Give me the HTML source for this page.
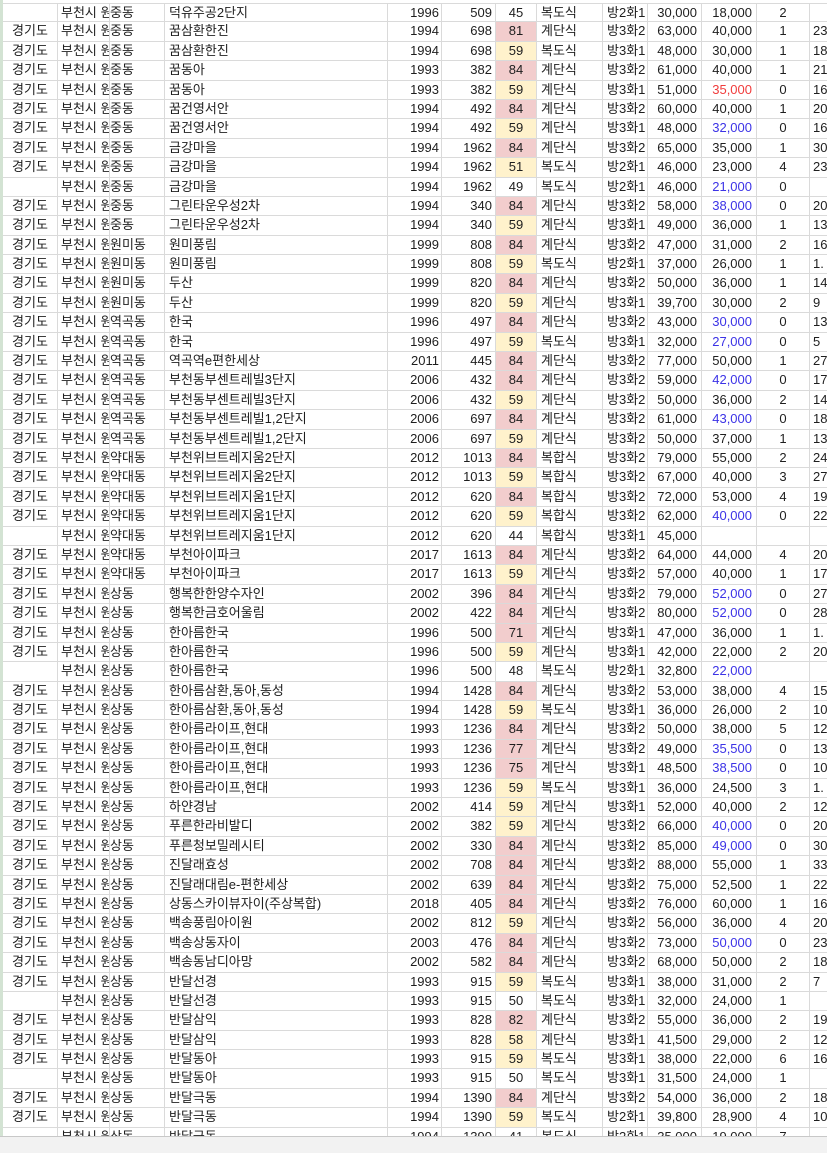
<!DOCTYPE html>
<html><head><meta charset="utf-8"><style>
body{margin:0;width:827px;height:1152px;overflow:hidden;background:#fff;position:relative;font-family:"Liberation Sans","Noto Sans CJK KR",sans-serif;font-size:13px;color:#1e1e1e}
#g{position:absolute;left:3px;top:3px;width:830px}
.r{display:flex;height:19.4px;box-sizing:border-box;border-bottom:1px solid #dadada}
.r i{font-style:normal;display:block;box-sizing:border-box;border-right:1px solid #dadada;overflow:hidden;white-space:nowrap;line-height:18.4px;height:18.4px}
.r i:nth-child(1){width:55px;text-align:center}
.r i:nth-child(2){width:52px;padding-left:3px}
.r i:nth-child(3){width:55px;padding-left:0}
.r i:nth-child(4){width:223px;padding-left:4px}
.r i:nth-child(5){width:54px;text-align:right;padding-right:2px}
.r i:nth-child(6){width:54px;text-align:right;padding-right:3px}
.r i:nth-child(7){width:41px;text-align:center}
.r i:nth-child(8){width:66px;padding-left:4px}
.r i:nth-child(9){width:45px;padding-left:4px}
.r i:nth-child(10){width:54px;text-align:right;padding-right:4px}
.r i:nth-child(11){width:55px;text-align:right;padding-right:4px}
.r i:nth-child(12){width:53px;text-align:center}
.r i:nth-child(13){width:20px;padding-left:3px;border-right:none}
.r i.p{background:#f2cdcd}.r i.y{background:#fff2cc}
.r i.b{color:#3c33e6}.r i.d{color:#f03c3c}
#lft{position:absolute;left:0;top:0;width:3px;height:1137px;background:#d3e3d3}
#bot{position:absolute;left:0;top:1136px;width:827px;height:16px;background:#f2f2f2;border-top:1px solid #c8c8c8}
</style></head><body>
<div id="lft"></div>
<div id="g">
<div class="r" style="border-top:1px solid #dadada"><i></i><i>부천시 원미구</i><i>중동</i><i>덕유주공2단지</i><i>1996</i><i>509</i><i>45</i><i>복도식</i><i>방2화1</i><i>30,000</i><i>18,000</i><i>2</i><i></i></div>
<div class="r"><i>경기도</i><i>부천시 원미구</i><i>중동</i><i>꿈삼환한진</i><i>1994</i><i>698</i><i class="p">81</i><i>계단식</i><i>방3화2</i><i>63,000</i><i>40,000</i><i>1</i><i>23</i></div>
<div class="r"><i>경기도</i><i>부천시 원미구</i><i>중동</i><i>꿈삼환한진</i><i>1994</i><i>698</i><i class="y">59</i><i>복도식</i><i>방3화1</i><i>48,000</i><i>30,000</i><i>1</i><i>18</i></div>
<div class="r"><i>경기도</i><i>부천시 원미구</i><i>중동</i><i>꿈동아</i><i>1993</i><i>382</i><i class="p">84</i><i>계단식</i><i>방3화2</i><i>61,000</i><i>40,000</i><i>1</i><i>21</i></div>
<div class="r"><i>경기도</i><i>부천시 원미구</i><i>중동</i><i>꿈동아</i><i>1993</i><i>382</i><i class="y">59</i><i>계단식</i><i>방3화1</i><i>51,000</i><i class="d">35,000</i><i>0</i><i>16</i></div>
<div class="r"><i>경기도</i><i>부천시 원미구</i><i>중동</i><i>꿈건영서안</i><i>1994</i><i>492</i><i class="p">84</i><i>계단식</i><i>방3화2</i><i>60,000</i><i>40,000</i><i>1</i><i>20</i></div>
<div class="r"><i>경기도</i><i>부천시 원미구</i><i>중동</i><i>꿈건영서안</i><i>1994</i><i>492</i><i class="y">59</i><i>계단식</i><i>방3화1</i><i>48,000</i><i class="b">32,000</i><i>0</i><i>16</i></div>
<div class="r"><i>경기도</i><i>부천시 원미구</i><i>중동</i><i>금강마을</i><i>1994</i><i>1962</i><i class="p">84</i><i>계단식</i><i>방3화2</i><i>65,000</i><i>35,000</i><i>1</i><i>30</i></div>
<div class="r"><i>경기도</i><i>부천시 원미구</i><i>중동</i><i>금강마을</i><i>1994</i><i>1962</i><i class="y">51</i><i>복도식</i><i>방2화1</i><i>46,000</i><i>23,000</i><i>4</i><i>23</i></div>
<div class="r"><i></i><i>부천시 원미구</i><i>중동</i><i>금강마을</i><i>1994</i><i>1962</i><i>49</i><i>복도식</i><i>방2화1</i><i>46,000</i><i class="b">21,000</i><i>0</i><i></i></div>
<div class="r"><i>경기도</i><i>부천시 원미구</i><i>중동</i><i>그린타운우성2차</i><i>1994</i><i>340</i><i class="p">84</i><i>계단식</i><i>방3화2</i><i>58,000</i><i class="b">38,000</i><i>0</i><i>20</i></div>
<div class="r"><i>경기도</i><i>부천시 원미구</i><i>중동</i><i>그린타운우성2차</i><i>1994</i><i>340</i><i class="y">59</i><i>계단식</i><i>방3화1</i><i>49,000</i><i>36,000</i><i>1</i><i>13</i></div>
<div class="r"><i>경기도</i><i>부천시 원미구</i><i>원미동</i><i>원미풍림</i><i>1999</i><i>808</i><i class="p">84</i><i>계단식</i><i>방3화2</i><i>47,000</i><i>31,000</i><i>2</i><i>16</i></div>
<div class="r"><i>경기도</i><i>부천시 원미구</i><i>원미동</i><i>원미풍림</i><i>1999</i><i>808</i><i class="y">59</i><i>복도식</i><i>방2화1</i><i>37,000</i><i>26,000</i><i>1</i><i>1.</i></div>
<div class="r"><i>경기도</i><i>부천시 원미구</i><i>원미동</i><i>두산</i><i>1999</i><i>820</i><i class="p">84</i><i>계단식</i><i>방3화2</i><i>50,000</i><i>36,000</i><i>1</i><i>14</i></div>
<div class="r"><i>경기도</i><i>부천시 원미구</i><i>원미동</i><i>두산</i><i>1999</i><i>820</i><i class="y">59</i><i>계단식</i><i>방3화1</i><i>39,700</i><i>30,000</i><i>2</i><i>9</i></div>
<div class="r"><i>경기도</i><i>부천시 원미구</i><i>역곡동</i><i>한국</i><i>1996</i><i>497</i><i class="p">84</i><i>계단식</i><i>방3화2</i><i>43,000</i><i class="b">30,000</i><i>0</i><i>13</i></div>
<div class="r"><i>경기도</i><i>부천시 원미구</i><i>역곡동</i><i>한국</i><i>1996</i><i>497</i><i class="y">59</i><i>복도식</i><i>방3화1</i><i>32,000</i><i class="b">27,000</i><i>0</i><i>5</i></div>
<div class="r"><i>경기도</i><i>부천시 원미구</i><i>역곡동</i><i>역곡역e편한세상</i><i>2011</i><i>445</i><i class="p">84</i><i>계단식</i><i>방3화2</i><i>77,000</i><i>50,000</i><i>1</i><i>27</i></div>
<div class="r"><i>경기도</i><i>부천시 원미구</i><i>역곡동</i><i>부천동부센트레빌3단지</i><i>2006</i><i>432</i><i class="p">84</i><i>계단식</i><i>방3화2</i><i>59,000</i><i class="b">42,000</i><i>0</i><i>17</i></div>
<div class="r"><i>경기도</i><i>부천시 원미구</i><i>역곡동</i><i>부천동부센트레빌3단지</i><i>2006</i><i>432</i><i class="y">59</i><i>계단식</i><i>방3화2</i><i>50,000</i><i>36,000</i><i>2</i><i>14</i></div>
<div class="r"><i>경기도</i><i>부천시 원미구</i><i>역곡동</i><i>부천동부센트레빌1,2단지</i><i>2006</i><i>697</i><i class="p">84</i><i>계단식</i><i>방3화2</i><i>61,000</i><i class="b">43,000</i><i>0</i><i>18</i></div>
<div class="r"><i>경기도</i><i>부천시 원미구</i><i>역곡동</i><i>부천동부센트레빌1,2단지</i><i>2006</i><i>697</i><i class="y">59</i><i>계단식</i><i>방3화2</i><i>50,000</i><i>37,000</i><i>1</i><i>13</i></div>
<div class="r"><i>경기도</i><i>부천시 원미구</i><i>약대동</i><i>부천위브트레지움2단지</i><i>2012</i><i>1013</i><i class="p">84</i><i>복합식</i><i>방3화2</i><i>79,000</i><i>55,000</i><i>2</i><i>24</i></div>
<div class="r"><i>경기도</i><i>부천시 원미구</i><i>약대동</i><i>부천위브트레지움2단지</i><i>2012</i><i>1013</i><i class="y">59</i><i>복합식</i><i>방3화2</i><i>67,000</i><i>40,000</i><i>3</i><i>27</i></div>
<div class="r"><i>경기도</i><i>부천시 원미구</i><i>약대동</i><i>부천위브트레지움1단지</i><i>2012</i><i>620</i><i class="p">84</i><i>복합식</i><i>방3화2</i><i>72,000</i><i>53,000</i><i>4</i><i>19</i></div>
<div class="r"><i>경기도</i><i>부천시 원미구</i><i>약대동</i><i>부천위브트레지움1단지</i><i>2012</i><i>620</i><i class="y">59</i><i>복합식</i><i>방3화2</i><i>62,000</i><i class="b">40,000</i><i>0</i><i>22</i></div>
<div class="r"><i></i><i>부천시 원미구</i><i>약대동</i><i>부천위브트레지움1단지</i><i>2012</i><i>620</i><i>44</i><i>복합식</i><i>방3화1</i><i>45,000</i><i></i><i></i><i></i></div>
<div class="r"><i>경기도</i><i>부천시 원미구</i><i>약대동</i><i>부천아이파크</i><i>2017</i><i>1613</i><i class="p">84</i><i>계단식</i><i>방3화2</i><i>64,000</i><i>44,000</i><i>4</i><i>20</i></div>
<div class="r"><i>경기도</i><i>부천시 원미구</i><i>약대동</i><i>부천아이파크</i><i>2017</i><i>1613</i><i class="y">59</i><i>계단식</i><i>방3화2</i><i>57,000</i><i>40,000</i><i>1</i><i>17</i></div>
<div class="r"><i>경기도</i><i>부천시 원미구</i><i>상동</i><i>행복한한양수자인</i><i>2002</i><i>396</i><i class="p">84</i><i>계단식</i><i>방3화2</i><i>79,000</i><i class="b">52,000</i><i>0</i><i>27</i></div>
<div class="r"><i>경기도</i><i>부천시 원미구</i><i>상동</i><i>행복한금호어울림</i><i>2002</i><i>422</i><i class="p">84</i><i>계단식</i><i>방3화2</i><i>80,000</i><i class="b">52,000</i><i>0</i><i>28</i></div>
<div class="r"><i>경기도</i><i>부천시 원미구</i><i>상동</i><i>한아름한국</i><i>1996</i><i>500</i><i class="p">71</i><i>계단식</i><i>방3화1</i><i>47,000</i><i>36,000</i><i>1</i><i>1.</i></div>
<div class="r"><i>경기도</i><i>부천시 원미구</i><i>상동</i><i>한아름한국</i><i>1996</i><i>500</i><i class="y">59</i><i>계단식</i><i>방3화1</i><i>42,000</i><i>22,000</i><i>2</i><i>20</i></div>
<div class="r"><i></i><i>부천시 원미구</i><i>상동</i><i>한아름한국</i><i>1996</i><i>500</i><i>48</i><i>복도식</i><i>방2화1</i><i>32,800</i><i class="b">22,000</i><i></i><i></i></div>
<div class="r"><i>경기도</i><i>부천시 원미구</i><i>상동</i><i>한아름삼환,동아,동성</i><i>1994</i><i>1428</i><i class="p">84</i><i>계단식</i><i>방3화2</i><i>53,000</i><i>38,000</i><i>4</i><i>15</i></div>
<div class="r"><i>경기도</i><i>부천시 원미구</i><i>상동</i><i>한아름삼환,동아,동성</i><i>1994</i><i>1428</i><i class="y">59</i><i>복도식</i><i>방3화1</i><i>36,000</i><i>26,000</i><i>2</i><i>10</i></div>
<div class="r"><i>경기도</i><i>부천시 원미구</i><i>상동</i><i>한아름라이프,현대</i><i>1993</i><i>1236</i><i class="p">84</i><i>계단식</i><i>방3화2</i><i>50,000</i><i>38,000</i><i>5</i><i>12</i></div>
<div class="r"><i>경기도</i><i>부천시 원미구</i><i>상동</i><i>한아름라이프,현대</i><i>1993</i><i>1236</i><i class="p">77</i><i>계단식</i><i>방3화2</i><i>49,000</i><i class="b">35,500</i><i>0</i><i>13</i></div>
<div class="r"><i>경기도</i><i>부천시 원미구</i><i>상동</i><i>한아름라이프,현대</i><i>1993</i><i>1236</i><i class="p">75</i><i>계단식</i><i>방3화1</i><i>48,500</i><i class="b">38,500</i><i>0</i><i>10</i></div>
<div class="r"><i>경기도</i><i>부천시 원미구</i><i>상동</i><i>한아름라이프,현대</i><i>1993</i><i>1236</i><i class="y">59</i><i>복도식</i><i>방3화1</i><i>36,000</i><i>24,500</i><i>3</i><i>1.</i></div>
<div class="r"><i>경기도</i><i>부천시 원미구</i><i>상동</i><i>하얀경남</i><i>2002</i><i>414</i><i class="y">59</i><i>계단식</i><i>방3화1</i><i>52,000</i><i>40,000</i><i>2</i><i>12</i></div>
<div class="r"><i>경기도</i><i>부천시 원미구</i><i>상동</i><i>푸른한라비발디</i><i>2002</i><i>382</i><i class="y">59</i><i>계단식</i><i>방3화2</i><i>66,000</i><i class="b">40,000</i><i>0</i><i>20</i></div>
<div class="r"><i>경기도</i><i>부천시 원미구</i><i>상동</i><i>푸른청보밀레시티</i><i>2002</i><i>330</i><i class="p">84</i><i>계단식</i><i>방3화2</i><i>85,000</i><i class="b">49,000</i><i>0</i><i>30</i></div>
<div class="r"><i>경기도</i><i>부천시 원미구</i><i>상동</i><i>진달래효성</i><i>2002</i><i>708</i><i class="p">84</i><i>계단식</i><i>방3화2</i><i>88,000</i><i>55,000</i><i>1</i><i>33</i></div>
<div class="r"><i>경기도</i><i>부천시 원미구</i><i>상동</i><i>진달래대림e-편한세상</i><i>2002</i><i>639</i><i class="p">84</i><i>계단식</i><i>방3화2</i><i>75,000</i><i>52,500</i><i>1</i><i>22</i></div>
<div class="r"><i>경기도</i><i>부천시 원미구</i><i>상동</i><i>상동스카이뷰자이(주상복합)</i><i>2018</i><i>405</i><i class="p">84</i><i>계단식</i><i>방3화2</i><i>76,000</i><i>60,000</i><i>1</i><i>16</i></div>
<div class="r"><i>경기도</i><i>부천시 원미구</i><i>상동</i><i>백송풍림아이원</i><i>2002</i><i>812</i><i class="y">59</i><i>계단식</i><i>방3화2</i><i>56,000</i><i>36,000</i><i>4</i><i>20</i></div>
<div class="r"><i>경기도</i><i>부천시 원미구</i><i>상동</i><i>백송상동자이</i><i>2003</i><i>476</i><i class="p">84</i><i>계단식</i><i>방3화2</i><i>73,000</i><i class="b">50,000</i><i>0</i><i>23</i></div>
<div class="r"><i>경기도</i><i>부천시 원미구</i><i>상동</i><i>백송동남디아망</i><i>2002</i><i>582</i><i class="p">84</i><i>계단식</i><i>방3화2</i><i>68,000</i><i>50,000</i><i>2</i><i>18</i></div>
<div class="r"><i>경기도</i><i>부천시 원미구</i><i>상동</i><i>반달선경</i><i>1993</i><i>915</i><i class="y">59</i><i>복도식</i><i>방3화1</i><i>38,000</i><i>31,000</i><i>2</i><i>7</i></div>
<div class="r"><i></i><i>부천시 원미구</i><i>상동</i><i>반달선경</i><i>1993</i><i>915</i><i>50</i><i>복도식</i><i>방3화1</i><i>32,000</i><i>24,000</i><i>1</i><i></i></div>
<div class="r"><i>경기도</i><i>부천시 원미구</i><i>상동</i><i>반달삼익</i><i>1993</i><i>828</i><i class="p">82</i><i>계단식</i><i>방3화2</i><i>55,000</i><i>36,000</i><i>2</i><i>19</i></div>
<div class="r"><i>경기도</i><i>부천시 원미구</i><i>상동</i><i>반달삼익</i><i>1993</i><i>828</i><i class="y">58</i><i>계단식</i><i>방3화1</i><i>41,500</i><i>29,000</i><i>2</i><i>12</i></div>
<div class="r"><i>경기도</i><i>부천시 원미구</i><i>상동</i><i>반달동아</i><i>1993</i><i>915</i><i class="y">59</i><i>복도식</i><i>방3화1</i><i>38,000</i><i>22,000</i><i>6</i><i>16</i></div>
<div class="r"><i></i><i>부천시 원미구</i><i>상동</i><i>반달동아</i><i>1993</i><i>915</i><i>50</i><i>복도식</i><i>방3화1</i><i>31,500</i><i>24,000</i><i>1</i><i></i></div>
<div class="r"><i>경기도</i><i>부천시 원미구</i><i>상동</i><i>반달극동</i><i>1994</i><i>1390</i><i class="p">84</i><i>계단식</i><i>방3화2</i><i>54,000</i><i>36,000</i><i>2</i><i>18</i></div>
<div class="r"><i>경기도</i><i>부천시 원미구</i><i>상동</i><i>반달극동</i><i>1994</i><i>1390</i><i class="y">59</i><i>복도식</i><i>방2화1</i><i>39,800</i><i>28,900</i><i>4</i><i>10</i></div>
<div class="r"><i></i><i>부천시 원미구</i><i>상동</i><i>반달극동</i><i>1994</i><i>1390</i><i>41</i><i>복도식</i><i>방2화1</i><i>35,000</i><i>19,000</i><i>7</i><i></i></div>
</div>
<div id="bot"></div>
</body></html>
